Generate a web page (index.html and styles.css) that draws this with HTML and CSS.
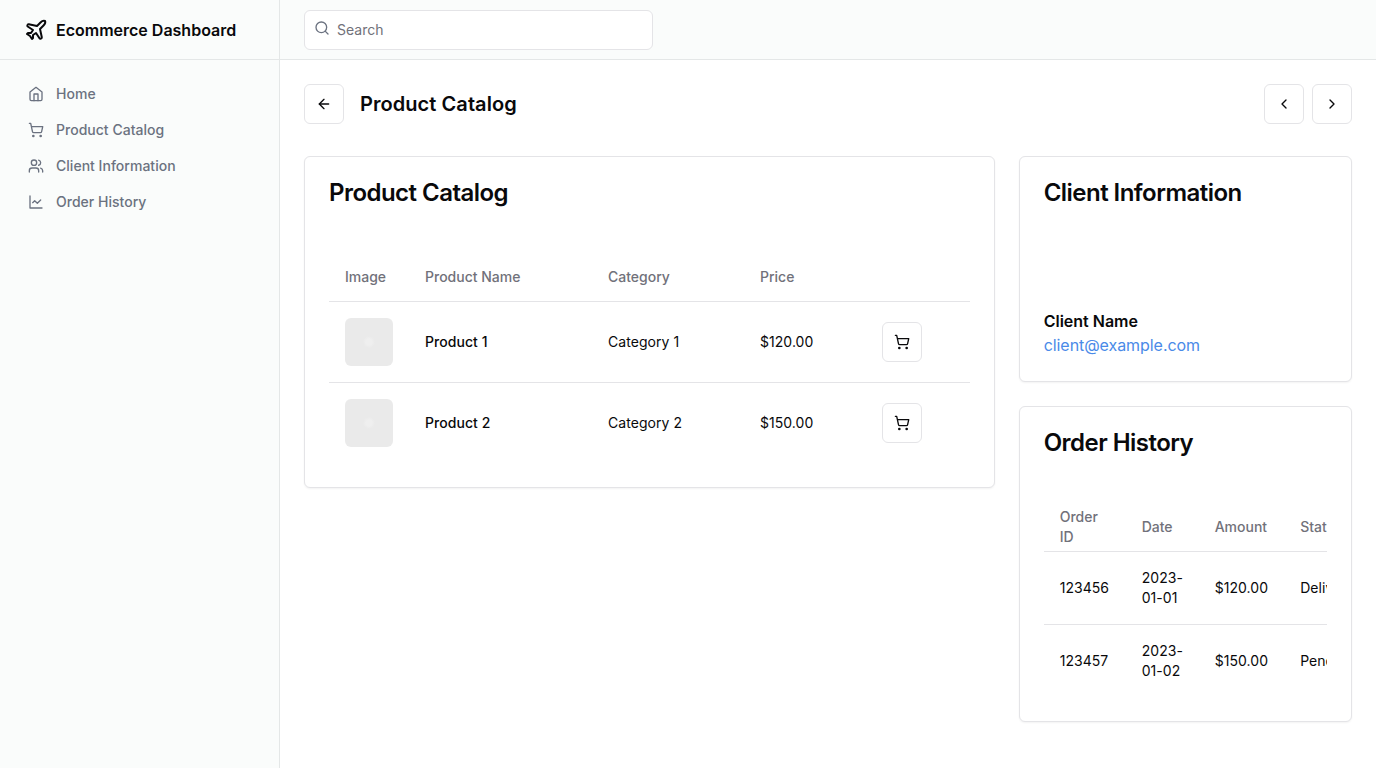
FILE: index.html
```html
<!DOCTYPE html>
<html lang="en">
<head>
<meta charset="utf-8">
<title>Ecommerce Dashboard</title>
<link rel="stylesheet" href="styles.css">
</head>
<body>
<svg class="sprite" aria-hidden="true">
  <symbol id="cart" viewBox="0 0 24 24"><circle cx="8" cy="21" r="1"/><circle cx="19" cy="21" r="1"/><path d="M2.05 2.05h2l2.66 12.42a2 2 0 0 0 2 1.58h9.78a2 2 0 0 0 1.95-1.57l1.65-7.43H5.12"/></symbol>
</svg>
<div class="layout">
  <aside class="sidebar">
    <a class="brand">
      <svg class="icon icon-lg" viewBox="0 0 24 24"><path d="M17.8 19.2 16 11l3.5-3.5C21 6 21.5 4 21 3c-1-.5-3 0-4.5 1.5L13 8 4.8 6.2c-.5-.1-.9.1-1.1.5l-.3.5c-.2.5-.1 1 .3 1.3L9 12l-2 3H4l-1 1 3 2 2 3 1-1v-3l3-2 3.5 5.3c.3.4.8.5 1.3.3l.5-.2c.4-.3.6-.7.5-1.2z"/></svg>
      <span>Ecommerce Dashboard</span>
    </a>
    <nav class="nav">
      <a class="nav-link"><svg class="icon" viewBox="0 0 24 24"><path d="m3 9 9-7 9 7v11a2 2 0 0 1-2 2H5a2 2 0 0 1-2-2z"/><path d="M9 22V12h6v10"/></svg>Home</a>
      <a class="nav-link"><svg class="icon"><use href="#cart"/></svg>Product Catalog</a>
      <a class="nav-link"><svg class="icon" viewBox="0 0 24 24"><path d="M16 21v-2a4 4 0 0 0-4-4H6a4 4 0 0 0-4 4v2"/><circle cx="9" cy="7" r="4"/><path d="M22 21v-2a4 4 0 0 0-3-3.87"/><path d="M16 3.13a4 4 0 0 1 0 7.75"/></svg>Client Information</a>
      <a class="nav-link"><svg class="icon" viewBox="0 0 24 24"><path d="M3 3v18h18"/><path d="m19 9-5 5-4-4-3 3"/></svg>Order History</a>
    </nav>
  </aside>
  <div class="content">
    <header class="topbar">
      <div class="search">
        <svg class="icon search-icon" viewBox="0 0 24 24"><circle cx="11" cy="11" r="8"/><path d="m21 21-4.3-4.3"/></svg>
        <input class="search-input" type="search" placeholder="Search">
      </div>
    </header>
    <main class="main">
      <div class="page-head">
        <button class="btn" aria-label="Back"><svg class="icon" viewBox="0 0 24 24"><path d="m12 19-7-7 7-7"/><path d="M19 12H5"/></svg></button>
        <h1 class="page-title">Product Catalog</h1>
        <div class="pager">
          <button class="btn" aria-label="Previous"><svg class="icon" viewBox="0 0 24 24"><path d="m15 18-6-6 6-6"/></svg></button>
          <button class="btn" aria-label="Next"><svg class="icon" viewBox="0 0 24 24"><path d="m9 18 6-6-6-6"/></svg></button>
        </div>
      </div>
      <div class="grid">
        <section class="card card-wide">
          <h3 class="card-title">Product Catalog</h3>
          <div class="card-body">
            <table class="table products">
              <colgroup><col class="p-image"><col class="p-name"><col class="p-category"><col class="p-price"><col></colgroup>
              <thead><tr><th>Image</th><th>Product Name</th><th>Category</th><th>Price</th><th></th></tr></thead>
              <tbody>
                <tr><td><div class="thumb"></div></td><td class="strong">Product 1</td><td>Category 1</td><td>$120.00</td><td><button class="btn" aria-label="Add to cart"><svg class="icon"><use href="#cart"/></svg></button></td></tr>
                <tr><td><div class="thumb"></div></td><td class="strong">Product 2</td><td>Category 2</td><td>$150.00</td><td><button class="btn" aria-label="Add to cart"><svg class="icon"><use href="#cart"/></svg></button></td></tr>
              </tbody>
            </table>
          </div>
        </section>
        <div class="side">
          <section class="card">
            <h3 class="card-title">Client Information</h3>
            <div class="card-body">
              <div class="avatar"></div>
              <div class="client-name">Client Name</div>
              <a class="client-mail">client@example.com</a>
            </div>
          </section>
          <section class="card">
            <h3 class="card-title">Order History</h3>
            <div class="card-body">
              <div class="clip">
                <table class="table orders">
                  <colgroup><col class="o-id"><col class="o-date"><col class="o-amount"><col class="o-status"></colgroup>
                  <thead><tr><th>Order ID</th><th>Date</th><th>Amount</th><th>Status</th></tr></thead>
                  <tbody>
                    <tr><td>123456</td><td>2023-01-01</td><td>$120.00</td><td>Delivered</td></tr>
                    <tr><td>123457</td><td>2023-01-02</td><td>$150.00</td><td>Pending</td></tr>
                  </tbody>
                </table>
              </div>
            </div>
          </section>
        </div>
      </div>
    </main>
  </div>
</div>
</body>
</html>
```
FILE: styles.css
```css
*, *::before, *::after { box-sizing: border-box; margin: 0; padding: 0; }
body { font: 16px/24px Inter, sans-serif; color: #09090b; background: #fff; }
.sprite { display: none; }
.icon { width: 16px; height: 16px; flex: none; display: block; fill: none; stroke: currentColor; stroke-width: 2; stroke-linecap: round; stroke-linejoin: round; }
.icon-lg { width: 24px; height: 24px; }

.layout { display: grid; grid-template-columns: 280px 1fr; height: 100vh; overflow: hidden; }
.sidebar { background: #fafcfb; border-right: 1px solid #e4e7e7; }
.brand { display: flex; align-items: center; gap: 8px; height: 60px; padding: 0 24px; border-bottom: 1px solid #e4e7e7; font-weight: 600; }
.nav { padding: 16px; display: flex; flex-direction: column; font-size: 14px; line-height: 20px; font-weight: 500; letter-spacing: 0.02px; }
.nav-link { display: flex; align-items: center; gap: 12px; padding: 8px 12px; color: #6b7280; }

.content { display: flex; flex-direction: column; min-width: 0; }
.topbar { display: flex; align-items: center; height: 60px; padding: 0 24px; background: #fafcfb; border-bottom: 1px solid #e4e7e7; }
.search { position: relative; width: 33.3333%; }
.search-icon { position: absolute; left: 10px; top: 10px; color: #6b7280; }
.search-input { display: block; width: 100%; height: 40px; padding: 8px 12px 8px 32px; border: 1px solid #e4e4e7; border-radius: 6px; background: #fff; font: 14px/20px Inter, sans-serif; outline: none; appearance: none; }
.search-input::placeholder { color: #71717a; }

.main { padding: 24px; display: flex; flex-direction: column; gap: 32px; }
.page-head { display: flex; align-items: center; gap: 16px; }
.page-title { font-size: 20px; line-height: 28px; font-weight: 600; letter-spacing: 0.06px; }
.pager { display: flex; gap: 8px; margin-left: auto; }
.btn { display: flex; align-items: center; justify-content: center; width: 40px; height: 40px; border: 1px solid #e4e4e7; border-radius: 6px; background: #fff; color: #09090b; }

.grid { display: grid; grid-template-columns: repeat(3, minmax(0, 1fr)); gap: 24px; align-items: start; }
.card-wide { grid-column: span 2; }
.side { display: flex; flex-direction: column; gap: 24px; min-width: 0; }
.card { border: 1px solid #e4e4e7; border-radius: 6px; background: #fff; box-shadow: 0 1px 2px rgba(0, 0, 0, 0.05); }
.card-title { padding: 24px; font-size: 24px; line-height: 24px; font-weight: 600; letter-spacing: -0.53px; }
.card-body { padding: 24px; }

.table { table-layout: fixed; border-collapse: collapse; width: 100%; font-size: 14px; line-height: 20px; }
.table tr { border-bottom: 1px solid #e4e4e7; }
.table tbody tr:last-child { border-bottom: 0; }
.table th { height: 48px; padding: 0 16px; text-align: left; vertical-align: middle; font-weight: 500; color: #71717a; }
.table td { padding: 16px; vertical-align: middle; letter-spacing: 0.05px; }
.strong { font-weight: 500; }
.p-image { width: 80px; }
.p-name { width: 183px; }
.p-category { width: 152px; }
.p-price { width: 122px; }
.thumb { width: 48px; height: 48px; border-radius: 6px; background: radial-gradient(circle, #efefef 0 3px, #eaeaea 6px); }

.avatar { height: 40px; margin-bottom: 16px; }
.client-name { font-weight: 600; }
.client-mail { display: block; color: #4a8ae8; letter-spacing: -0.06px; }

.clip { overflow: hidden; }
.orders { width: 339px; }
.o-id { width: 82px; }
.o-date { width: 73px; }
.o-amount { width: 85.5px; }
.o-status { width: 98.5px; }
```
